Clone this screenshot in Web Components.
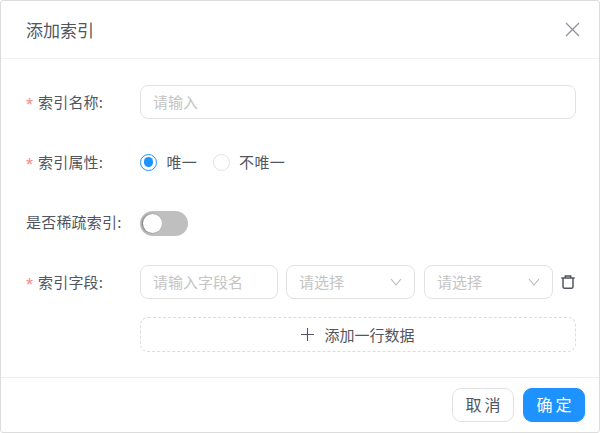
<!DOCTYPE html>
<html lang="zh">
<head>
<meta charset="utf-8">
<title>添加索引</title>
<style>
  html, body { margin: 0; padding: 0; background: #fff; }
  body { font-family: "Noto Sans CJK SC", "Noto Sans", sans-serif; color: #50555f; font-size: 15px; }
</style>
</head>
<body>
<index-dialog heading="添加索引">
  <form-row label="索引名称:" required>
    <text-field placeholder="请输入" style="flex:1"></text-field>
  </form-row>
  <form-row label="索引属性:" required>
    <radio-option checked>唯一</radio-option>
    <radio-option>不唯一</radio-option>
  </form-row>
  <form-row label="是否稀疏索引:">
    <toggle-switch></toggle-switch>
  </form-row>
  <form-row label="索引字段:" required>
    <text-field placeholder="请输入字段名" style="width:138px;flex:none"></text-field>
    <select-field placeholder="请选择"></select-field>
    <select-field placeholder="请选择" style="margin-left:1px"></select-field>
    <svg width="14" height="14" viewBox="0 0 14 14" fill="none" stroke="#50555f" stroke-width="1.5" style="flex:none">
      <path d="M.3 3h13.4M4.3 3V1h5.4v2M2 3v8.7A1.5 1.5 0 0 0 3.5 13.2h7A1.5 1.5 0 0 0 12 11.7V3"/>
    </svg>
  </form-row>
  <add-row-button>添加一行数据</add-row-button>
  <dialog-button slot="footer">取消</dialog-button>
  <dialog-button slot="footer" primary>确定</dialog-button>
</index-dialog>

<script>
class IndexDialog extends HTMLElement {
    constructor() {
        super();
        this.attachShadow({ mode: 'open' });
    }

    connectedCallback() {
        this.shadowRoot.innerHTML = `
        <style>
            :host { display: flex; flex-direction: column; box-sizing: border-box; width: 600px; height: 433px; border: 1px solid #dcdcdc; border-radius: 3px; background: #fff; overflow: hidden; }
            header { display: flex; align-items: center; justify-content: space-between; flex: none; box-sizing: border-box; height: 58px; padding: 0 19px 1px 25px; font-size: 17px; color: #50555f; border-bottom: 1px solid #f1f1f1; }
            main { flex: 1; display: flex; flex-direction: column; padding: 26px 23px 0 25px; }
            footer { display: flex; flex: none; justify-content: flex-end; gap: 9px; box-sizing: border-box; height: 55px; padding: 10px 14px 0 0; border-top: 1px solid #ececec; }
            svg { display: block; }
        </style>
        <header>
            <span>${this.getAttribute('heading')}</span>
            <svg width="15" height="15" viewBox="0 0 15 15" stroke="#8f939c" stroke-width="1.3" fill="none"><path d="M1 1l13 13M14 1L1 14"/></svg>
        </header>
        <main><slot></slot></main>
        <footer><slot name="footer"></slot></footer>
        `;
    }
}

class FormRow extends HTMLElement {
    constructor() {
        super();
        this.attachShadow({ mode: 'open' });
    }

    connectedCallback() {
        const star = this.hasAttribute('required') ? '<i>*</i>' : '';
        this.shadowRoot.innerHTML = `
        <style>
            :host { display: flex; align-items: center; height: 34px; margin-bottom: 26px; }
            label { flex: none; width: 114px; display: flex; align-items: center; white-space: nowrap; color: #50555f; letter-spacing: .2px; padding-bottom: 2px; }
            i { width: 12px; font: normal 18px/18px "Liberation Sans", sans-serif; color: #f58a8a; padding-top: 8px; }
            .control { flex: 1; display: flex; align-items: center; gap: 8px; min-width: 0; }
        </style>
        <label>${star}<span>${this.getAttribute('label')}</span></label>
        <div class="control"><slot></slot></div>
        `;
    }
}

class TextField extends HTMLElement {
    constructor() {
        super();
        this.attachShadow({ mode: 'open' });
    }

    connectedCallback() {
        this.shadowRoot.innerHTML = `
        <style>
            :host { display: flex; align-items: center; box-sizing: border-box; height: 34px; padding: 0 12px 1px; border: 1px solid #e2e2e2; border-radius: 8px; color: #c4c4c4; }
        </style>
        <span>${this.getAttribute('placeholder')}</span>
        `;
    }
}

class SelectField extends HTMLElement {
    constructor() {
        super();
        this.attachShadow({ mode: 'open' });
    }

    connectedCallback() {
        this.shadowRoot.innerHTML = `
        <style>
            :host { display: flex; flex: none; align-items: center; justify-content: space-between; box-sizing: border-box; width: 129px; height: 34px; padding: 0 12px 1px; border: 1px solid #e2e2e2; border-radius: 8px; color: #c4c4c4; }
            svg { display: block; }
        </style>
        <span>${this.getAttribute('placeholder')}</span>
        <svg width="12" height="8" viewBox="0 0 12 8" fill="none" stroke="#b4b7bd" stroke-width="1.1"><path d="M1 1l5 6 5-6"/></svg>
        `;
    }
}

class RadioOption extends HTMLElement {
    constructor() {
        super();
        this.attachShadow({ mode: 'open' });
    }

    connectedCallback() {
        this.shadowRoot.innerHTML = `
        <style>
            :host { display: inline-flex; align-items: center; gap: 9.5px; margin-right: 7.5px; color: #50555f; }
            .dot { box-sizing: border-box; width: 17px; height: 17px; border-radius: 50%; border: 1px solid #e2e2e2; display: flex; align-items: center; justify-content: center; }
            :host([checked]) .dot { border: 1.3px solid #1e93ff; }
            :host([checked]) .dot::after { content: ''; width: 9.5px; height: 9.5px; border-radius: 50%; background: #1e93ff; }
            .text { padding-bottom: 1px; letter-spacing: .3px; }
        </style>
        <span class="dot"></span><span class="text"><slot></slot></span>
        `;
    }
}

class ToggleSwitch extends HTMLElement {
    constructor() {
        super();
        this.attachShadow({ mode: 'open' });
    }

    connectedCallback() {
        this.shadowRoot.innerHTML = `
        <style>
            :host { display: block; box-sizing: border-box; width: 47.5px; height: 25px; margin-top: 2px; padding: 3px; border-radius: 13px; background: #bfbfbf; }
            div { width: 19px; height: 19px; border-radius: 50%; background: #fff; box-shadow: -1px 0 2px rgba(0,0,0,.4); }
        </style>
        <div></div>
        `;
    }
}

class AddRowButton extends HTMLElement {
    constructor() {
        super();
        this.attachShadow({ mode: 'open' });
    }

    connectedCallback() {
        this.shadowRoot.innerHTML = `
        <style>
            :host { display: flex; align-items: center; justify-content: center; gap: 10px; box-sizing: border-box; height: 35px; margin: -8px 0 0 114px; border: 1px dashed #dcdcdc; border-radius: 8px; color: #50555f; }
            svg { display: block; }
            span { padding-bottom: 1px; }
        </style>
        <svg width="13" height="13" viewBox="0 0 13 13" stroke="#50555f" stroke-width="1.1"><path d="M6.5 0v13M0 6.5h13"/></svg>
        <span><slot></slot></span>
        `;
    }
}

class DialogButton extends HTMLElement {
    constructor() {
        super();
        this.attachShadow({ mode: 'open' });
    }

    connectedCallback() {
        this.shadowRoot.innerHTML = `
        <style>
            :host { display: flex; align-items: center; justify-content: center; box-sizing: border-box; width: 62px; height: 34px; padding-bottom: 2px; border: 1px solid #e2e2e2; border-radius: 9px; color: #50555f; font-size: 16px; letter-spacing: 3px; text-indent: 3px; }
            :host([primary]) { background: #1e93ff; border-color: #1e93ff; color: #fff; }
        </style>
        <slot></slot>
        `;
    }
}

customElements.define('index-dialog', IndexDialog);
customElements.define('form-row', FormRow);
customElements.define('text-field', TextField);
customElements.define('select-field', SelectField);
customElements.define('radio-option', RadioOption);
customElements.define('toggle-switch', ToggleSwitch);
customElements.define('add-row-button', AddRowButton);
customElements.define('dialog-button', DialogButton);
</script>
</body>
</html>
